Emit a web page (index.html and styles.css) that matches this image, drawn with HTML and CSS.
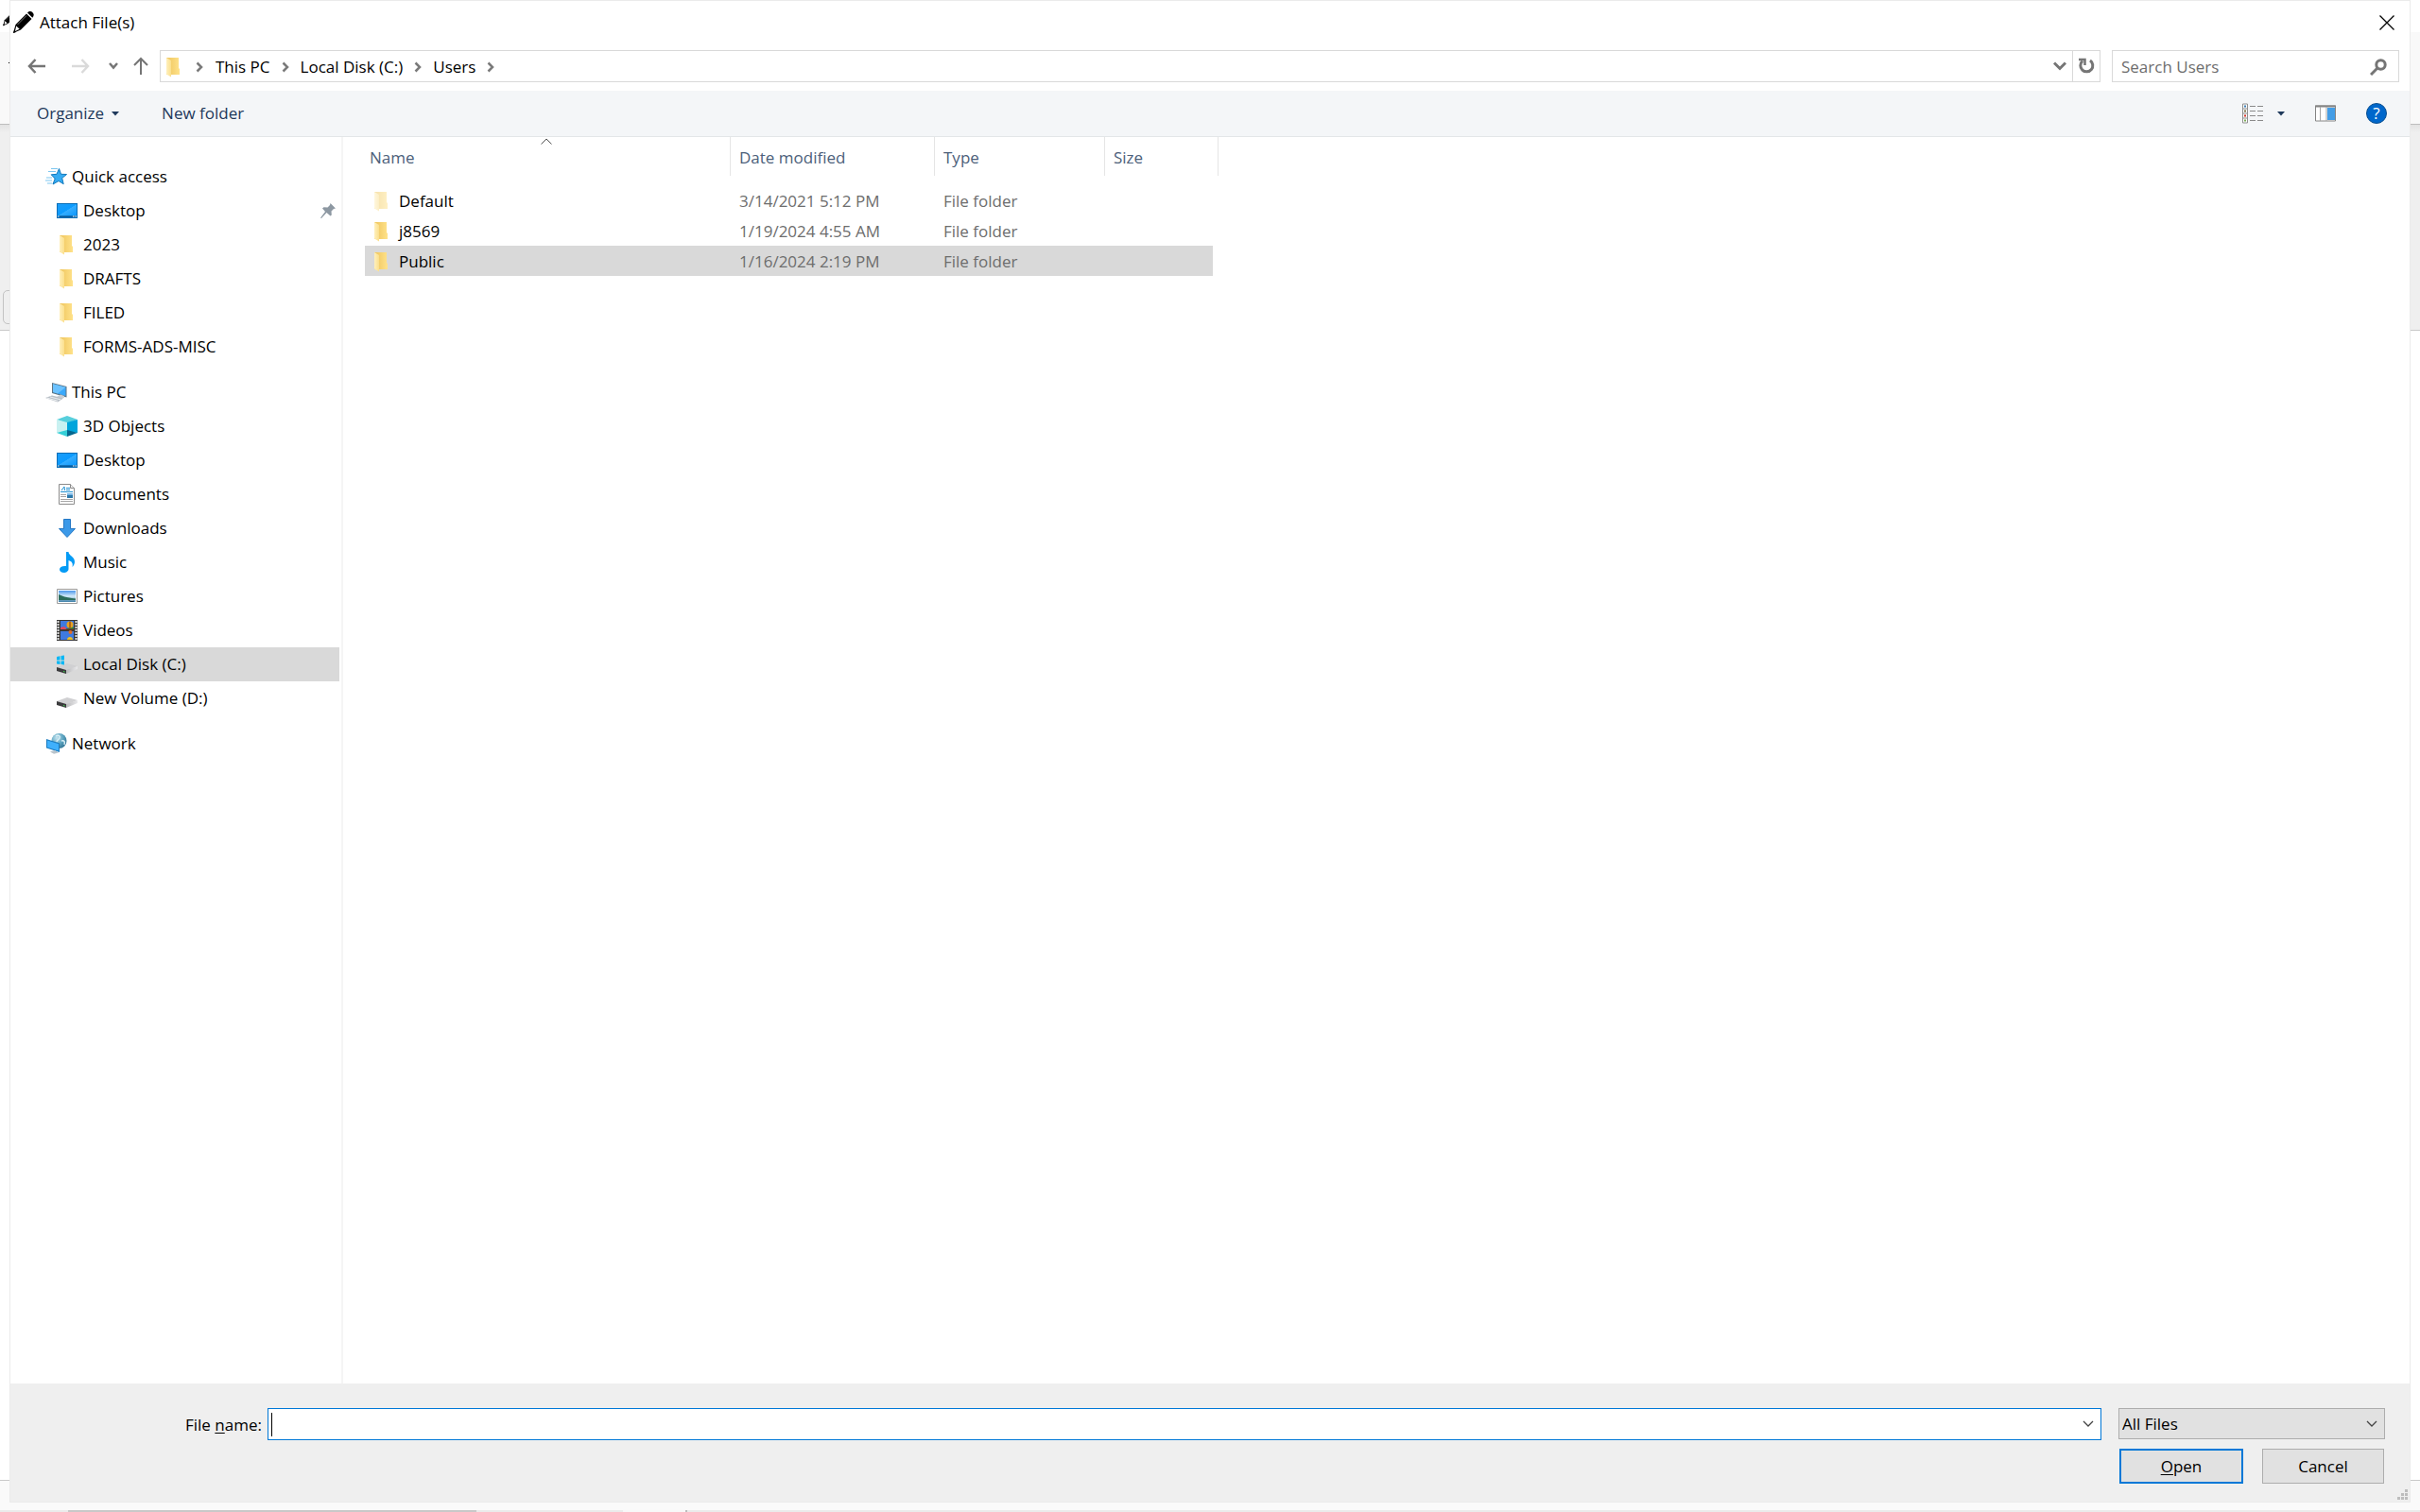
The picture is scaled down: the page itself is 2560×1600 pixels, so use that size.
FILE: index.html
```html
<!DOCTYPE html>
<html lang="en">
<head>
<meta charset="utf-8">
<title>Attach File(s)</title>
<link rel="stylesheet" href="styles.css">
</head>
<body>
<svg class="sprite" aria-hidden="true">
  <defs>
    <linearGradient id="gold" x1="0" x2="1"><stop offset="0" stop-color="#eec45c"/><stop offset="1" stop-color="#ffe28a"/></linearGradient>
    <linearGradient id="flap" x1="0" x2="1"><stop offset="0" stop-color="#fff0bd"/><stop offset="1" stop-color="#fbdf8c"/></linearGradient>
    <linearGradient id="screen" x1="0" x2="1" y1="0" y2="1"><stop offset="0" stop-color="#1c9cf6"/><stop offset=".5" stop-color="#0c9bff"/><stop offset=".52" stop-color="#35adff"/><stop offset="1" stop-color="#0a95fb"/></linearGradient>
    <linearGradient id="metal" x1="0" x2="1"><stop offset="0" stop-color="#b9b9bb"/><stop offset="1" stop-color="#e9e9eb"/></linearGradient>
    <linearGradient id="sky" x1="0" x2="0" y1="0" y2="1"><stop offset="0" stop-color="#4c97ea"/><stop offset=".5" stop-color="#d6ecfa"/><stop offset="1" stop-color="#3d7fa8"/></linearGradient>
    <radialGradient id="globeFill" cx=".35" cy=".3" r=".8"><stop offset="0" stop-color="#c4e4ef"/><stop offset=".5" stop-color="#5fa6c2"/><stop offset="1" stop-color="#2c6f90"/></radialGradient>
  </defs>
  <symbol id="folder" viewBox="0 0 22 22"><path d="M3 1h13v11l1 1v6H3z" fill="url(#gold)"/><path d="M3 1l5 3v17.500l-5-3z" fill="url(#flap)"/></symbol>
  <symbol id="desktop" viewBox="0 0 22 22"><path d="M0 3h22v16H0z" fill="#0a6fb8"/><path d="M1 4h20v12.500H1z" fill="url(#screen)"/><path d="M1 16.500h20V18H1z" fill="#0a5c9c"/><path d="M1 17h1.500M17 17h1.500M19.500 17H21" stroke="#fff"/></symbol>
  <symbol id="star" viewBox="0 0 24 22"><path d="M14.500 2.500l2 5.800 6 .2-4.800 4 1.500 6.200-5.200-3.200-6 3.500 2.200-6-4-4.200 5.800-.5z" fill="#35abf2" stroke="#1279bd"/><path d="M6 2.500h7M3 5.500h8M1 12h6M0 15h7M2 18h5" stroke="#7cc6f0"/></symbol>
  <symbol id="pc" viewBox="0 0 24 22"><path d="M7 1l15.500 4v11.500L7 12z" fill="#5d7586"/><path d="M8 2.300l13.500 3.500v9.300L8 11z" fill="#3aa9fb"/><path d="M8 2.300l13.500 3.500L13 12.500 8 11z" fill="#6cc2ff"/><path d="M12 16l4-2.500 4 1.500v2l-4 .5z" fill="#c9cfd4"/><path d="M0 17l7-2.500 12 3-6 4z" fill="#b9c0c7"/><path d="M2 17.200l11 3M5 16l11 2.800" stroke="#eceff1"/></symbol>
  <symbol id="cube" viewBox="0 0 22 22"><path d="M0 4l11-4 11 4-11 4z" fill="#57cfdc"/><path d="M0 4l11 3v10L0 18z" fill="#c9f1f1"/><path d="M22 4L11 7v10l11 1z" fill="#00a5dc"/><path d="M0 18l11-3v7z" fill="#34cfd7"/><path d="M22 18l-11-3v7z" fill="#05688f"/></symbol>
  <symbol id="document" viewBox="0 0 22 22"><path d="M2.500.5h12l4 4v17h-16z" fill="#fff" stroke="#8b8b8b"/><path d="M14.500.5v4h4" fill="#eee" stroke="#8b8b8b"/><path d="M5 7l3-4 .5 4M10 4.500h4M10 6.500h4M4 8.500h13" stroke="#1e90d2" fill="none"/><path d="M4 11.500h6M4 13.500h6M4 16.500h13M4 18.500h13" stroke="#a5a5a5"/><path d="M11 10h6v5h-6z" fill="#2b78a9"/><path d="M11 10h6v2h-6z" fill="#7ab7e6"/></symbol>
  <symbol id="download" viewBox="0 0 22 22"><path d="M7.500 1.500h7v10h5L11 20.500l-8.500-9h5z" fill="#3c99e8" stroke="#2377c4"/></symbol>
  <symbol id="music" viewBox="0 0 22 22"><path d="M10 0h2.500c0 4 7 5 6.500 11-.3 2.500-1.500 4-2.500 5 1-4-.5-6-4-7v9c0 2.500-2.500 4-5 4S3 20.500 3 18.500s2.500-4 7-3.500z" fill="#059bf5"/></symbol>
  <symbol id="picture" viewBox="0 0 22 22"><path d="M.5 3.500h21v15H.5z" fill="#fff" stroke="#9b9b9b"/><path d="M2 5h18v12H2z" fill="url(#sky)"/><path d="M2 9c4 2 8 3 14 4l4 .5V15H2z" fill="#2c6d5c"/></symbol>
  <symbol id="video" viewBox="0 0 22 22"><path d="M0 0h22v22H0z" fill="#3a3a3a"/><path d="M1.500 1v21M20.500 1v21" stroke="#e8e8e8" stroke-width="2" stroke-dasharray="2 1"/><path d="M4 1h14v9H4zM4 12h14v9H4z" fill="#3f7ae0"/><path d="M4 8l4-1 3 3H4z" fill="#e2465c"/><path d="M9 10l7-3 2 1v2z" fill="#2d8a3c"/><circle cx="14" cy="5" r="3.500" fill="#e7a321"/><path d="M14 1.500v7M10 10h8" stroke="#7b2b16"/><circle cx="14.500" cy="13" r="2" fill="#e06c25"/><path d="M11 21c0-4 6-4 6 0z" fill="#f0bf22"/></symbol>
  <symbol id="drive" viewBox="0 0 22 22"><path d="M0 14l11-4 11 3-12 4.500z" fill="#d0d0d2"/><path d="M22 13v3l-12 5v-4z" fill="url(#metal)"/><path d="M0 14l10 3v4L0 18z" fill="#3b3b3d"/><path d="M7 18l1.500.5v1L7 19z" fill="#3bdf4a"/></symbol>
  <symbol id="system-drive" viewBox="0 0 22 22"><use href="#drive" width="22" height="22"/><path d="M0 3l3.500-.7V6.500H0zM4.500 2.100L8 1.500v5H4.500zM0 7.500h3.500V11L0 10.500zM4.500 7.500H8v4l-3.500-.5z" fill="#00b7f5"/></symbol>
  <symbol id="network" viewBox="0 0 24 22"><circle cx="14.500" cy="8" r="8" fill="url(#globeFill)"/><path d="M11 3c3-2 5 0 4 2s-3 2-3 4M17 8c3-1 4 1 3 4" stroke="#d6edf4" stroke-width="1.500" fill="none"/><path d="M1 6l14 4.500V20L1 15.500z" fill="#1c7cc0"/><path d="M2 7.500l12 3.800v7.300L2 14.800z" fill="#3fb0fc"/><path d="M5 19.500l5-1.500 4 2.500-5 1.300z" fill="#b8c3cb"/></symbol>
  <symbol id="pencil" viewBox="0 0 22 24"><path d="M0 23l2.500-9L14 2.500 19.500 8 8 19.500z" fill="#000"/><path d="M15 1.500C17-.5 19-.3 20.500 1.200s1.700 3.500-.2 5.500z" fill="#000"/><path d="M3.200 15.500l3.500 3.300-4.700 2.200z" fill="#fff"/><path d="M4.500 14L14 4.500" stroke="#777"/><path d="M0 23l1-3 2 2z" fill="#000"/></symbol>
  <symbol id="crumb" viewBox="0 0 8 12"><path d="M1.500 1.500L6 6l-4.500 4.500" fill="none" stroke="#7a7a7a" stroke-width="2.500"/></symbol>
  <symbol id="thin-down" viewBox="0 0 12 8"><path d="M1 1l5 5 5-5" fill="none" stroke="#444" stroke-width="1.300"/></symbol>
</svg>

<div class="screen">
  <div class="behind" aria-hidden="true">
    <div class="behind-title"><svg class="behind-pencil"><use href="#pencil"/></svg></div>
    <div class="behind-menu"><span class="behind-dash"></span></div>
    <div class="behind-panel"><span class="behind-field"></span></div>
    <div class="behind-body"></div>
    <div class="behind-status"></div>
    <div class="behind-strip"><span class="strip-thumb"></span><span class="strip-light"></span><span class="strip-gap"></span><span class="strip-mark"></span></div>
  </div>

  <main class="dialog">
    <header class="titlebar">
      <svg class="pencil" aria-hidden="true"><use href="#pencil"/></svg>
      <h1>Attach File(s)</h1>
      <button class="icon-button close" aria-label="Close"><svg width="16" height="16"><path d="M.5.5l15 15M15.500.5l-15 15" stroke="#000" stroke-width="1.300"/></svg></button>
    </header>

    <div class="navbar">
      <div class="history">
        <button class="icon-button" aria-label="Back"><svg width="20" height="16"><path d="M19 8H2M8.500 1L2 8l6.500 7" fill="none" stroke="#757575" stroke-width="2.500"/></svg></button>
        <button class="icon-button forward" aria-label="Forward"><svg width="20" height="16"><path d="M1 8h17M11.500 1L18 8l-6.500 7" fill="none" stroke="#dadada" stroke-width="2.500"/></svg></button>
        <button class="icon-button recent" aria-label="Recent locations"><svg width="10" height="8"><path d="M1 1l4 4.500L9 1" fill="none" stroke="#757575" stroke-width="2.500"/></svg></button>
        <button class="icon-button up" aria-label="Up"><svg width="16" height="20"><path d="M8 19V2M1 9l7-7 7 7" fill="none" stroke="#757575" stroke-width="2"/></svg></button>
      </div>
      <div class="address">
        <nav class="crumbs" aria-label="Location">
          <svg class="icon" aria-hidden="true"><use href="#folder"/></svg>
          <svg class="crumb first"><use href="#crumb"/></svg>
          <a href="#">This PC</a><svg class="crumb"><use href="#crumb"/></svg>
          <a href="#">Local Disk (C:)</a><svg class="crumb"><use href="#crumb"/></svg>
          <a href="#">Users</a><svg class="crumb"><use href="#crumb"/></svg>
        </nav>
        <button class="icon-button previous" aria-label="Previous locations"><svg width="14" height="10"><path d="M1 1.500l6 6 6-6" fill="none" stroke="#757575" stroke-width="3"/></svg></button>
        <button class="icon-button refresh" aria-label="Refresh"><svg width="18" height="18"><path d="M5 3.500a6.500 6.500 0 1 0 8-.5" fill="none" stroke="#757575" stroke-width="3"/><path d="M1 2h6.500v6" fill="none" stroke="#757575" stroke-width="2.500"/></svg></button>
      </div>
      <label class="search">
        <input type="search" placeholder="Search Users" aria-label="Search Users">
        <svg width="18" height="18" aria-hidden="true"><circle cx="11.500" cy="6.500" r="4.700" fill="none" stroke="#757575" stroke-width="3"/><path d="M8 10l-7 7" stroke="#757575" stroke-width="3"/></svg>
      </label>
    </div>

    <div class="toolbar">
      <button class="command">Organize <svg width="8" height="5" aria-hidden="true"><path d="M0 0h8L4 4.500z" fill="#1e395b"/></svg></button>
      <button class="command">New folder</button>
      <span class="spring"></span>
      <button class="icon-button" aria-label="Change your view"><svg width="22" height="22"><path d="M.5 1h5v20h-5zM.5 6h5M.5 11h5M.5 16h5" fill="#fff" stroke="#8f8f8f"/><path d="M2 3.500h2" stroke="#3b7fb5" stroke-width="2"/><path d="M2 8.500h2" stroke="#7c7346" stroke-width="2"/><path d="M2 13.500h2" stroke="#d33227" stroke-width="2"/><path d="M2 18.500h2" stroke="#7bab57" stroke-width="2"/><path d="M8 3.500h6M16 3.500h6M8 8.500h6M16 8.500h6M8 13.500h6M16 13.500h6M8 18.500h6M16 18.500h6" stroke="#8a8a8a"/></svg></button>
      <button class="icon-button view-more" aria-label="More options"><svg width="8" height="5"><path d="M0 0h8L4 4.500z" fill="#1e395b"/></svg></button>
      <button class="icon-button pane" aria-label="Show the preview pane"><svg width="22" height="18"><path d="M.5 1h21v16H.5z" fill="#fff" stroke="#848484"/><path d="M0 1.500h22" stroke="#848484" stroke-width="2"/><path d="M5.500 2v15M12 2v15" stroke="#a5a5a5"/><path d="M13 3h8v13h-8z" fill="#439de6"/></svg></button>
      <button class="icon-button help" aria-label="Get help">?</button>
    </div>

    <div class="content">
      <nav class="tree" aria-label="Folders">
        <a class="node root" href="#"><svg class="icon wide"><use href="#star"/></svg>Quick access</a>
        <a class="node" href="#"><svg class="icon"><use href="#desktop"/></svg>Desktop<svg class="pin" viewBox="0 0 16 16"><path d="M10.500 0L16 5.500l-2 .5-2.500 2.500.3 4-1.300 1L6.500 10 1 16l-1-.5L5 9 2 5.500l1.500-1.300 4 .3L10 2z" fill="#8d98a2"/></svg></a>
        <a class="node" href="#"><svg class="icon"><use href="#folder"/></svg>2023</a>
        <a class="node" href="#"><svg class="icon"><use href="#folder"/></svg>DRAFTS</a>
        <a class="node" href="#"><svg class="icon"><use href="#folder"/></svg>FILED</a>
        <a class="node" href="#"><svg class="icon"><use href="#folder"/></svg>FORMS-ADS-MISC</a>
        <a class="node root" href="#"><svg class="icon wide"><use href="#pc"/></svg>This PC</a>
        <a class="node" href="#"><svg class="icon"><use href="#cube"/></svg>3D Objects</a>
        <a class="node" href="#"><svg class="icon"><use href="#desktop"/></svg>Desktop</a>
        <a class="node" href="#"><svg class="icon"><use href="#document"/></svg>Documents</a>
        <a class="node" href="#"><svg class="icon"><use href="#download"/></svg>Downloads</a>
        <a class="node" href="#"><svg class="icon"><use href="#music"/></svg>Music</a>
        <a class="node" href="#"><svg class="icon"><use href="#picture"/></svg>Pictures</a>
        <a class="node" href="#"><svg class="icon"><use href="#video"/></svg>Videos</a>
        <a class="node selected" href="#"><svg class="icon"><use href="#system-drive"/></svg>Local Disk (C:)</a>
        <a class="node" href="#"><svg class="icon"><use href="#drive"/></svg>New Volume (D:)</a>
        <a class="node root" href="#"><svg class="icon wide"><use href="#network"/></svg>Network</a>
      </nav>

      <section class="files" aria-label="Files">
        <table>
          <colgroup><col class="col-name"><col class="col-date"><col class="col-type"><col class="col-size"></colgroup>
          <thead>
            <tr><th scope="col" aria-sort="ascending">Name<svg class="sort" viewBox="0 0 12 7" aria-hidden="true"><path d="M.5 6.500L6 1l5.500 5.500" fill="none" stroke="#555"/></svg></th><th scope="col">Date modified</th><th scope="col">Type</th><th scope="col">Size</th></tr>
          </thead>
          <tbody>
            <tr><td><span class="file"><svg class="icon faded"><use href="#folder"/></svg>Default</span></td><td>3/14/2021 5:12 PM</td><td>File folder</td><td></td></tr>
            <tr><td><span class="file"><svg class="icon"><use href="#folder"/></svg>j8569</span></td><td>1/19/2024 4:55 AM</td><td>File folder</td><td></td></tr>
            <tr class="selected"><td><span class="file"><svg class="icon"><use href="#folder"/></svg>Public</span></td><td>1/16/2024 2:19 PM</td><td>File folder</td><td></td></tr>
          </tbody>
        </table>
      </section>
    </div>

    <footer class="footer">
      <label class="name-label" for="filename">File <u>n</u>ame:</label>
      <div class="combo">
        <span class="caret"></span>
        <input id="filename" type="text">
        <button class="icon-button" aria-label="Show file names"><svg width="12" height="8"><use href="#thin-down"/></svg></button>
      </div>
      <div class="choices">
        <div class="filter">
          <select aria-label="File type"><option>All Files</option></select>
          <svg width="12" height="8" aria-hidden="true"><use href="#thin-down"/></svg>
        </div>
        <div class="actions">
          <button class="push default"><span><u>O</u>pen</span></button>
          <button class="push">Cancel</button>
        </div>
      </div>
      <svg class="grip" width="11" height="11" aria-hidden="true"><path d="M8 0h3v3H8zM4 4h3v3H4zM8 4h3v3H8zM0 8h3v3H0zM4 8h3v3H4zM8 8h3v3H8z" fill="#bdbdbd"/></svg>
    </footer>
  </main>
</div>
</body>
</html>
```

FILE: styles.css
```css
* { box-sizing: border-box; }

body {
  margin: 0;
  font: 17px/24px "Open Sans", "Noto Sans", sans-serif;
  color: #000;
  background: #fff;
}

a { color: inherit; text-decoration: none; }
button, input, select { font: inherit; color: inherit; }
.sprite { position: absolute; width: 0; height: 0; }
u { text-underline-offset: 2px; text-decoration-thickness: 1px; }

.icon { width: 22px; height: 22px; flex: none; }
.icon.wide { width: 24px; }
.icon.faded { opacity: .5; }

.icon-button {
  display: flex;
  align-items: center;
  justify-content: center;
  padding: 0;
  border: 0;
  background: none;
}

/* Window behind and dialog share one grid cell */
.screen { display: grid; min-height: 100vh; }
.behind, .dialog { grid-area: 1 / 1; }

.behind { display: flex; flex-direction: column; }
.behind-title { height: 34px; padding: 12px 3px; }
.behind-pencil { display: block; width: 15px; height: 16px; }
.behind-menu {
  height: 98px;
  padding: 32px 9px;
  background: #f9f9f9;
  border-bottom: 1px solid #bebebe;
}
.behind-dash { display: block; width: 4px; height: 1px; background: #000; }
.behind-panel {
  height: 218px;
  padding: 175px 0 6px 3px;
  background: linear-gradient(#e3e3e3, #efefef 8px);
  border-bottom: 1px solid #c9c9c9;
}
.behind-field {
  display: block;
  width: 24px;
  height: 36px;
  border: 1px solid #c3c3c3;
  border-radius: 5px;
}
.behind-body { flex: 1; }
.behind-status { height: 32px; background: #fafafa; border-top: 1px solid #c9c9c9; }
.behind-strip { display: flex; height: 2px; padding-left: 72px; background: #ebebeb; }
.strip-thumb { width: 432px; background: #c8c8c8; }
.strip-light { width: 155px; background: #ebebeb; }
.strip-gap { width: 66px; background: #f8f8f8; }
.strip-mark { width: 2px; background: #bcbcbc; }

.dialog {
  display: flex;
  flex-direction: column;
  margin: 0 10px;
  margin-bottom: 10px;
  border: 1px solid #ebebeb;
  background: #fff;
}

.titlebar { display: flex; align-items: center; height: 45px; padding: 0 16px 0 3px; }
.titlebar h1 { margin: 0; font-size: 17px; font-weight: 400; flex: 1; }
.pencil { width: 22px; height: 24px; margin-right: 6px; }

.navbar { display: flex; height: 50px; padding: 7px 11px 9px 18px; }
.history { display: flex; align-items: center; width: 140px; }
.forward { margin-left: 26px; }
.recent { margin-left: 20px; }
.up { margin-left: 16px; }

.address { display: flex; flex: 1; border: 1px solid #d9d9d9; }
.crumbs { display: flex; align-items: center; flex: 1; padding: 1px 0 0 3px; }
.crumbs a { margin-right: 12px; }
.crumb { width: 8px; height: 12px; margin-right: 12px; }
.crumb.first { margin-left: 12px; margin-right: 13px; }
.previous { width: 26px; }
.refresh { width: 29px; border-left: 1px solid #d9d9d9; }

.search {
  display: flex;
  align-items: center;
  width: 304px;
  margin-left: 12px;
  padding: 1px 12px 0 9px;
  border: 1px solid #d9d9d9;
}
.search input { flex: 1; min-width: 0; padding: 0; border: 0; outline: 0; background: none; }
.search input::placeholder { color: #6d6d6d; opacity: 1; }

.toolbar {
  display: flex;
  align-items: center;
  height: 49px;
  padding: 0 24px 0 28px;
  background: #f4f6f8;
  border-bottom: 1px solid #e3e6e8;
  color: #1e395b;
}
.command {
  display: flex;
  align-items: center;
  gap: 8px;
  margin-right: 45px;
  padding: 0;
  border: 0;
  background: none;
}
.spring { flex: 1; }
.view-more { margin-left: 15px; }
.pane { margin-left: 32px; }
.help {
  width: 22px;
  height: 22px;
  margin-left: 32px;
  border: 1px solid #0b4f8f;
  border-radius: 50%;
  background: #0067cb;
  color: #fff;
}

.content { display: flex; flex: 1; }
.tree { width: 352px; padding-top: 24px; border-right: 2px solid #f5f5f5; }
.node {
  display: flex;
  align-items: center;
  gap: 6px;
  height: 36px;
  margin-right: 2px;
  padding-left: 49px;
}
.node.root { padding-left: 37px; gap: 4px; }
.node + .root { margin-top: 12px; }
.selected { background: #d9d9d9; }
.pin { width: 16px; height: 16px; margin-left: auto; margin-right: 4px; }

.files { flex: 1; padding-left: 23px; }
table { border-collapse: separate; border-spacing: 0; table-layout: fixed; width: 903px; }
.col-name { width: 387px; }
.col-date { width: 216px; }
.col-type { width: 180px; }
.col-size { width: 120px; }
th {
  position: relative;
  height: 41px;
  padding: 2px 9px 0;
  border-right: 1px solid #e5e5e5;
  color: #4c607a;
  font-weight: 400;
  text-align: left;
}
th:first-child { padding-left: 5px; }
.sort { position: absolute; top: 1px; left: 50%; width: 12px; height: 7px; margin-left: -7px; }
tbody::before { content: ""; display: block; height: 10px; }
td { height: 32px; padding: 1px 9px 0; color: #6d6d6d; }
td:first-child { padding-left: 7px; color: #000; }
td:last-child { border-right: 6px solid #fff; }
.file { display: flex; align-items: center; gap: 7px; }

.footer {
  display: flex;
  align-items: flex-start;
  height: 125px;
  padding: 26px 2px 2px 185px;
  background: #efefef;
}
.name-label { margin: 6px 6px 0 0; }
.combo {
  display: flex;
  flex: 1;
  align-items: center;
  height: 34px;
  padding: 0 7px 0 3px;
  border: 1px solid #0078d7;
  background: #fff;
}
.caret { width: 1px; height: 25px; background: #000; }
.combo input { flex: 1; min-width: 0; padding: 0; border: 0; outline: 0; background: none; }
.choices { width: 282px; margin-left: 18px; }
.filter { display: flex; align-items: center; }
.filter select {
  flex: 1;
  height: 33px;
  padding: 1px 3px 0;
  border: 1px solid #adadad;
  border-radius: 0;
  background: #e1e1e1;
  appearance: none;
}
.filter svg { margin-left: -20px; margin-right: 8px; pointer-events: none; }
.actions { display: flex; gap: 20px; padding: 10px 1px 0; }
.push { flex: 1; height: 37px; padding: 1px 0 0; border: 1px solid #adadad; background: #e1e1e1; }
.push.default { border: 2px solid #0078d7; }
.grip { align-self: flex-end; margin-left: 13px; }
```
